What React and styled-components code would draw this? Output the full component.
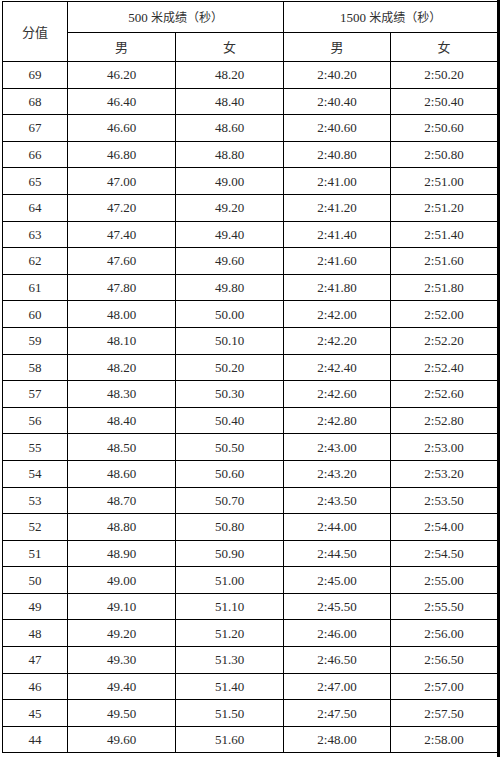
import React from 'react';
import styled, { createGlobalStyle } from 'styled-components';

const GlobalStyle = createGlobalStyle`
  html, body {
    margin: 0;
    padding: 0;
    background: #fff;
  }
`;

const rows = [
  ['69', '46.20', '48.20', '2:40.20', '2:50.20'],
  ['68', '46.40', '48.40', '2:40.40', '2:50.40'],
  ['67', '46.60', '48.60', '2:40.60', '2:50.60'],
  ['66', '46.80', '48.80', '2:40.80', '2:50.80'],
  ['65', '47.00', '49.00', '2:41.00', '2:51.00'],
  ['64', '47.20', '49.20', '2:41.20', '2:51.20'],
  ['63', '47.40', '49.40', '2:41.40', '2:51.40'],
  ['62', '47.60', '49.60', '2:41.60', '2:51.60'],
  ['61', '47.80', '49.80', '2:41.80', '2:51.80'],
  ['60', '48.00', '50.00', '2:42.00', '2:52.00'],
  ['59', '48.10', '50.10', '2:42.20', '2:52.20'],
  ['58', '48.20', '50.20', '2:42.40', '2:52.40'],
  ['57', '48.30', '50.30', '2:42.60', '2:52.60'],
  ['56', '48.40', '50.40', '2:42.80', '2:52.80'],
  ['55', '48.50', '50.50', '2:43.00', '2:53.00'],
  ['54', '48.60', '50.60', '2:43.20', '2:53.20'],
  ['53', '48.70', '50.70', '2:43.50', '2:53.50'],
  ['52', '48.80', '50.80', '2:44.00', '2:54.00'],
  ['51', '48.90', '50.90', '2:44.50', '2:54.50'],
  ['50', '49.00', '51.00', '2:45.00', '2:55.00'],
  ['49', '49.10', '51.10', '2:45.50', '2:55.50'],
  ['48', '49.20', '51.20', '2:46.00', '2:56.00'],
  ['47', '49.30', '51.30', '2:46.50', '2:56.50'],
  ['46', '49.40', '51.40', '2:47.00', '2:57.00'],
  ['45', '49.50', '51.50', '2:47.50', '2:57.50'],
  ['44', '49.60', '51.60', '2:48.00', '2:58.00'],
];

// column widths: 分值, then 男/女 for 500m and 1500m
const colWidths = [65, 108, 108, 107, 107];

const Page = styled.div`
  width: 500px;
  height: 757px;
  box-sizing: border-box;
  padding: 1px 0 0 2px;
  border-right: 3px solid #000;
  overflow: hidden;
`;

const Table = styled.table`
  width: 495px;
  border-collapse: collapse;
  table-layout: fixed;
  font-family: "Liberation Serif", "Noto Sans CJK SC", serif;
  font-size: 13px;
  color: #2a2a2a;
`;

const Col = styled.col`
  width: ${({ $w }) => $w}px;
`;

const HeadCell = styled.th`
  border: 1px solid #000;
  padding: 0;
  font-weight: 400;
  text-align: center;
  vertical-align: middle;
  height: ${({ $h }) => $h}px;
  line-height: 1;
`;

const Cell = styled.td`
  border: 1px solid #000;
  padding: 0;
  text-align: center;
  vertical-align: middle;
  height: 25.6px;
  line-height: 1;
`;

const Cjk = styled.span`
  font-family: "Noto Sans CJK SC", sans-serif;
  font-size: ${({ $size }) => $size || 12}px;
  color: #333;
`;

const Num = styled.span`
  font-family: "Liberation Serif", serif;
  font-size: 13px;
`;

export default function App() {
  return (
    <Page>
      <GlobalStyle />
      <Table>
        <colgroup>
          {colWidths.map((w, i) => (
            <Col key={i} $w={w} />
          ))}
        </colgroup>
        <thead>
          <tr>
            <HeadCell rowSpan={2} $h={30}>
              <Cjk $size={13}>分值</Cjk>
            </HeadCell>
            <HeadCell colSpan={2} $h={30}>
              <Num>500 </Num>
              <Cjk>米成绩（秒）</Cjk>
            </HeadCell>
            <HeadCell colSpan={2} $h={30}>
              <Num>1500 </Num>
              <Cjk>米成绩（秒）</Cjk>
            </HeadCell>
          </tr>
          <tr>
            {['男', '女', '男', '女'].map((t, i) => (
              <HeadCell key={i} $h={28}>
                <Cjk $size={13}>{t}</Cjk>
              </HeadCell>
            ))}
          </tr>
        </thead>
        <tbody>
          {rows.map((r) => (
            <tr key={r[0]}>
              {r.map((v, i) => (
                <Cell key={i}>{v}</Cell>
              ))}
            </tr>
          ))}
        </tbody>
      </Table>
    </Page>
  );
}
